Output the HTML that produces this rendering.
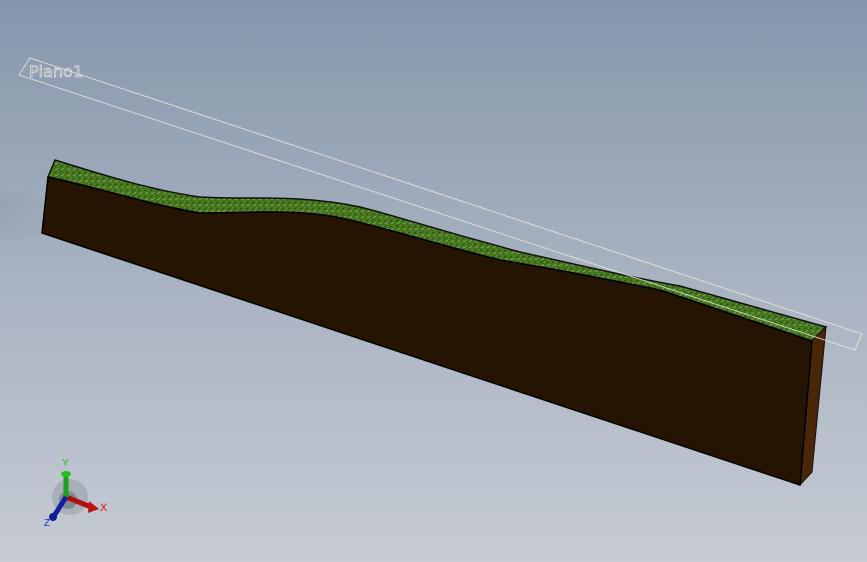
<!DOCTYPE html>
<html><head><style>
html,body{margin:0;padding:0;width:867px;height:562px;overflow:hidden}
body{background:linear-gradient(180deg,#8696ab 0%,#a5b0bf 45%,#c6cbd4 100%)}
</style></head><body>
<svg width="867" height="562" viewBox="0 0 867 562" xmlns="http://www.w3.org/2000/svg" style="position:absolute;left:0;top:0">
<defs>
<radialGradient id="sh" cx="0" cy="0.5" r="1"><stop offset="0" stop-color="#7a8496" stop-opacity="0.35"/><stop offset="1" stop-color="#7a8496" stop-opacity="0"/></radialGradient>
<pattern id="gr" width="6" height="6" patternUnits="userSpaceOnUse">
<rect width="6" height="6" fill="#44731f"/><rect x="1" y="1" width="2" height="1" fill="#79a844"/><rect x="4" y="3" width="1" height="2" fill="#62902f"/><rect x="0" y="4" width="2" height="1" fill="#2e5214"/><rect x="3" y="0" width="1" height="1" fill="#8ab552"/>
</pattern>
</defs>
<ellipse cx="10" cy="215" rx="50" ry="25" fill="url(#sh)"/>
<path d="M48,177 L55,160 C100,174 150,190 200,197 C250,200 300,194 360,207 C400,217 420,225 520,252 C600,270 640,279 680,286 L826,327 L812,341 L660,290 C600,278 560,270 500,260 C440,245 410,235 350,220 C300,208 250,213 200,213 C150,205 100,188 48,177 Z" fill="url(#gr)" stroke="#111" stroke-width="1.5"/>
<path d="M812,341 L826,327 L812,472 L800,485 Z" fill="#4a2608" stroke="#111" stroke-width="1"/>
<path d="M48,177 C100,188 150,205 200,213 C250,213 300,208 350,220 C410,235 440,245 500,260 C560,270 600,278 660,290 L812,341 L800,485 L42,233 Z" fill="#251402" stroke="#000" stroke-width="1.5"/>
<polygon points="30,58 862,334 855,350 19,75" fill="none" stroke="#e8e4dc" stroke-width="1" opacity="0.85"/>
<text x="29" y="77" font-family="DejaVu Sans, sans-serif" font-size="16" fill="none" stroke="#e6e2da" stroke-width="0.7">Plano1</text>
<circle cx="70" cy="497" r="18" fill="#9aa0a8" opacity="0.6"/>
<circle cx="68" cy="500" r="9" fill="#6a707a" opacity="0.6"/>
<line x1="66" y1="497" x2="91" y2="507" stroke="#b01010" stroke-width="5"/>
<polygon points="89,501 99,509 88,513" fill="#c01010"/>
<line x1="66" y1="497" x2="66" y2="475" stroke="#1aa01a" stroke-width="5"/>
<ellipse cx="66" cy="474" rx="5" ry="3" fill="#20c020"/>
<line x1="66" y1="497" x2="54" y2="516" stroke="#1020a0" stroke-width="5"/>
<circle cx="53" cy="517" r="4" fill="#102090"/>
<text x="62" y="466" font-family="Liberation Sans, sans-serif" font-size="10" fill="#20c020">Y</text>
<text x="100" y="511" font-family="Liberation Sans, sans-serif" font-size="11" fill="#e01010">X</text>
<text x="44" y="526" font-family="Liberation Sans, sans-serif" font-size="10" fill="#1030d0">Z</text>
</svg>
</body></html>
